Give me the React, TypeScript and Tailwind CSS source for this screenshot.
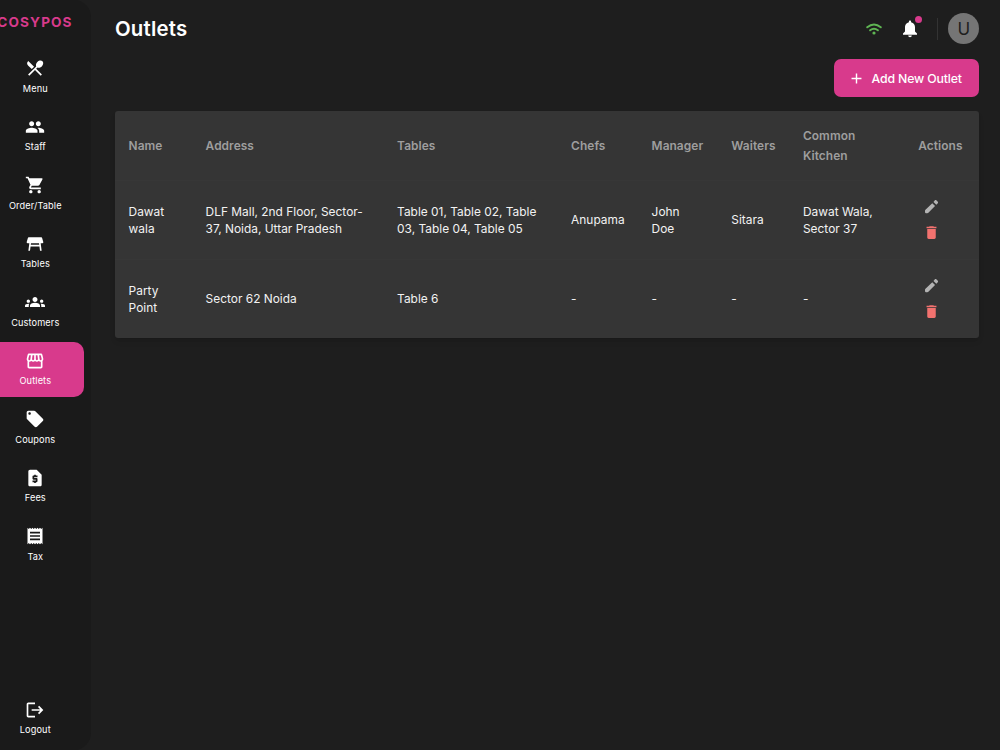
import type { IconType } from 'react-icons';
import {
  MdAdd,
  MdDelete,
  MdGroups,
  MdLocalOffer,
  MdLogout,
  MdOutlineStorefront,
  MdPeople,
  MdReceipt,
  MdRequestPage,
  MdRestaurantMenu,
  MdShoppingCart,
  MdTableRestaurant,
} from 'react-icons/md';

interface NavEntry {
  label: string;
  icon: IconType;
  active?: boolean;
}

interface Outlet {
  name: string;
  address: string;
  tables: string;
  chefs: string;
  manager: string;
  waiters: string;
  kitchen: string;
}

const navEntries: NavEntry[] = [
  { label: 'Menu', icon: MdRestaurantMenu },
  { label: 'Staff', icon: MdPeople },
  { label: 'Order/Table', icon: MdShoppingCart },
  { label: 'Tables', icon: MdTableRestaurant },
  { label: 'Customers', icon: MdGroups },
  { label: 'Outlets', icon: MdOutlineStorefront, active: true },
  { label: 'Coupons', icon: MdLocalOffer },
  { label: 'Fees', icon: MdRequestPage },
  { label: 'Tax', icon: MdReceipt },
];

const columns = ['Name', 'Address', 'Tables', 'Chefs', 'Manager', 'Waiters', 'Common Kitchen', 'Actions'];

const outlets: Outlet[] = [
  {
    name: 'Dawat wala',
    address: 'DLF Mall, 2nd Floor, Sector-37, Noida, Uttar Pradesh',
    tables: 'Table 01, Table 02, Table 03, Table 04, Table 05',
    chefs: 'Anupama',
    manager: 'John Doe',
    waiters: 'Sitara',
    kitchen: 'Dawat Wala, Sector 37',
  },
  {
    name: 'Party Point',
    address: 'Sector 62 Noida',
    tables: 'Table 6',
    chefs: '-',
    manager: '-',
    waiters: '-',
    kitchen: '-',
  },
];

function WifiIcon() {
  return (
    <svg viewBox="0 0 16 12" className="h-3 w-4 text-[#5fb553]" fill="none" stroke="currentColor" strokeWidth="1.9" strokeLinecap="round">
      <path d="M1.2 4.3Q8-1.5 14.8 4.3M4.1 7.3Q8 4.2 11.9 7.3" />
      <circle cx="8" cy="10" r="1.6" fill="currentColor" stroke="none" />
    </svg>
  );
}

function PencilIcon() {
  return (
    <svg viewBox="0 0 24 24" className="size-[17px] text-[#b3b3b3]" fill="currentColor">
      <path d="M2.8 18v2.2c0 .7.5 1.2 1.2 1.2h2.1c.6 0 1.1-.2 1.5-.6L17 11.3 13.1 7.3 3.5 16.5c-.4.4-.7.9-.7 1.5zM20.9 7.4c.6-.6.6-1.4 0-2l-2.1-2.1c-.6-.6-1.4-.6-2 0l-2 2.2 4 4z" />
    </svg>
  );
}

function NavItem({ label, icon: Icon, active }: NavEntry) {
  return (
    <div
      className={`flex h-[55px] w-[98px] flex-col items-center rounded-[10px] pt-[9px] text-white ${
        active ? 'bg-[#d83a8c]' : ''
      }`}
    >
      <Icon className="size-[20px]" />
      <span className="mt-[3.8px] pl-[0.6px] text-[9.2px] leading-[14px] tracking-[0.12px]">{label}</span>
    </div>
  );
}

function Sidebar() {
  return (
    <aside className="flex h-full w-[91px] shrink-0 flex-col overflow-hidden rounded-r-[17px] bg-[#1a1a1a]">
      <div className="-ml-[14px] flex h-full w-[98px] flex-col items-center">
        <div className="h-[49px] pt-[12px] text-[13.6px] leading-[20px] font-bold tracking-[1.1px] text-[#d83a8c]">
          COSYPOS
        </div>
        <nav className="flex flex-col gap-[3.5px]">
          {navEntries.map((entry) => (
            <NavItem key={entry.label} {...entry} />
          ))}
        </nav>
        <div className="mt-auto pb-[4.5px]">
          <NavItem label="Logout" icon={MdLogout} />
        </div>
      </div>
    </aside>
  );
}

function Header() {
  return (
    <header className="flex h-[57px] items-center justify-between">
      <h1 className="pt-px text-[20.4px] font-semibold tracking-[0.2px] text-white">Outlets</h1>
      <div className="flex items-center">
        <WifiIcon />
        <div className="relative ml-[20px]">
          <svg viewBox="0 0 16 18" className="h-[18px] w-4 text-white" fill="currentColor">
            <path d="M8 .6c.7 0 1.1.5 1.1 1.2v.4c2.5.6 3.9 2.5 3.9 4.9v4.5l2 2v1.2H1v-1.2l2-2V7.1c0-2.4 1.4-4.3 3.9-4.9v-.4C6.9 1.1 7.3.6 8 .6zM6.2 15.6h3.6c0 1-.8 1.6-1.8 1.6s-1.8-.6-1.8-1.6z" />
          </svg>
          <span className="absolute -top-[4px] -right-[4px] size-[7px] rounded-full bg-[#d83a8c]" />
        </div>
        <div className="ml-[19px] h-[22px] w-px bg-[#333333]" />
        <div className="ml-[10.5px] flex size-[30.6px] items-center justify-center rounded-full bg-[#757575] pt-[2px] text-[17px] text-[#1e1e1e]">
          U
        </div>
      </div>
    </header>
  );
}

function OutletTable() {
  return (
    <div className="mt-[14px] overflow-hidden rounded-[3px] bg-[#353535] shadow-md">
      <table className="w-full table-fixed border-collapse text-left text-[11.9px] text-[#f2f2f2]">
        <colgroup>
          <col className="w-[77px]" />
          <col className="w-[191.5px]" />
          <col className="w-[174px]" />
          <col className="w-[80.5px]" />
          <col className="w-[79.7px]" />
          <col className="w-[71.7px]" />
          <col className="w-[115.3px]" />
          <col className="w-[74.3px]" />
        </colgroup>
        <thead>
          <tr className="h-[69px] border-b border-[#373737]">
            {columns.map((column) => (
              <th
                key={column}
                className="px-[13.6px] pt-[1.5px] leading-[20.4px] font-semibold tracking-[0.07px] text-[#9e9e9e]"
              >
                {column}
              </th>
            ))}
          </tr>
        </thead>
        <tbody className="leading-[17px] tracking-[0.01px]">
          {outlets.map((outlet) => (
            <tr key={outlet.name} className="h-[79px] border-b border-[#373737] last:border-0">
              <td className="px-[13.6px]">{outlet.name}</td>
              <td className="px-[13.6px]">{outlet.address}</td>
              <td className="px-[13.6px]">{outlet.tables}</td>
              <td className="px-[13.6px]">{outlet.chefs}</td>
              <td className="px-[13.6px]">{outlet.manager}</td>
              <td className="px-[13.6px]">{outlet.waiters}</td>
              <td className="px-[13.6px]">{outlet.kitchen}</td>
              <td className="px-[13.6px]">
                {/* Edit / delete */}
                <div className="flex w-[26px] flex-col items-center gap-[9px] pb-px">
                  <PencilIcon />
                  <MdDelete className="size-[17px] text-[#f2726f]" />
                </div>
              </td>
            </tr>
          ))}
        </tbody>
      </table>
    </div>
  );
}

export default function App() {
  return (
    <div className="flex h-[750px] w-[1000px] overflow-hidden bg-[#1e1e1e] font-['Inter','Liberation_Sans',sans-serif]">
      <Sidebar />
      <main className="flex min-w-0 flex-1 flex-col pr-[21px] pl-[24px]">
        <Header />
        <div className="mt-[2px] flex justify-end">
          <button className="flex h-[38px] w-[145px] items-center rounded-[7px] bg-[#d83a8c] pl-[14px] text-[12.3px] font-medium whitespace-nowrap text-white">
            <MdAdd className="mr-[6.5px] size-[17px]" />
            <span className="pt-[2px] tracking-[-0.15px]">Add New Outlet</span>
          </button>
        </div>
        <OutletTable />
      </main>
    </div>
  );
}
